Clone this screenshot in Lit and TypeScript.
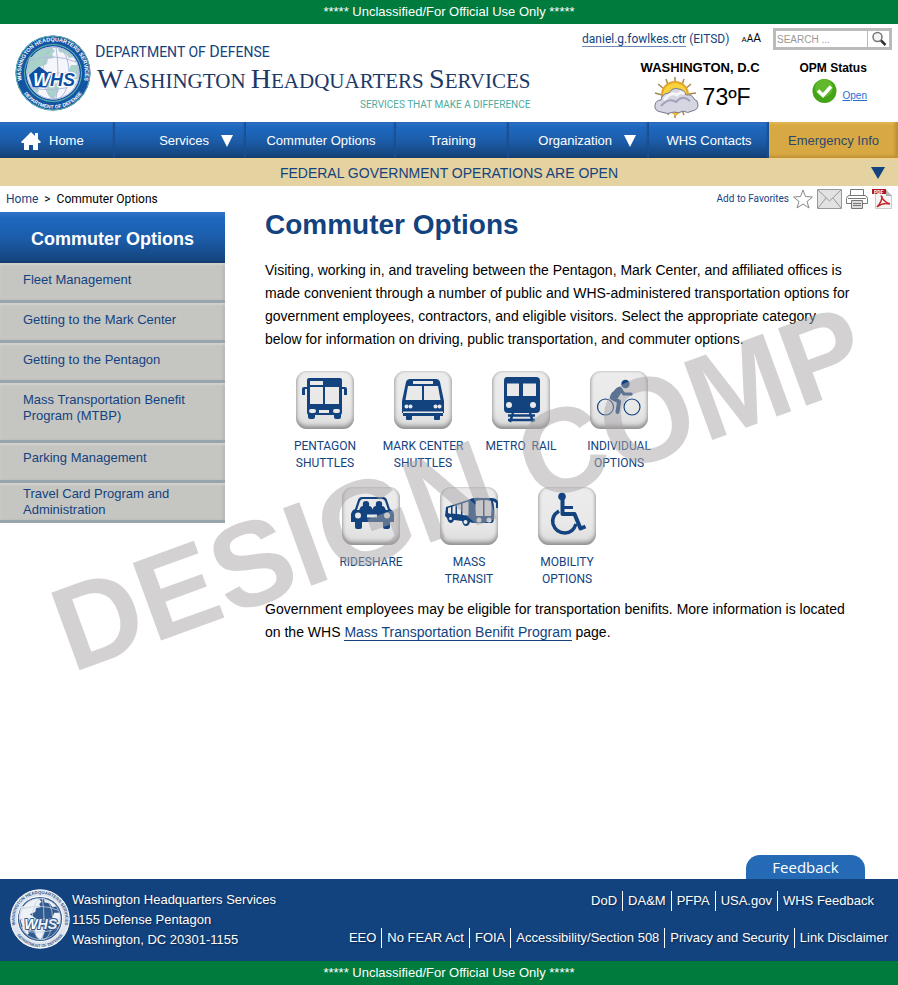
import { LitElement, html, css, svg } from "lit";
import { customElement, property } from "lit/decorators.js";

const NAV = [
  { label: "Home", icon: "home" },
  { label: "Services", menu: true },
  { label: "Commuter Options" },
  { label: "Training" },
  { label: "Organization", menu: true },
  { label: "WHS Contacts" },
  { label: "Emergency Info", alert: true },
];

const SIDE = [
  { label: "Fleet Management" },
  { label: "Getting to the Mark Center" },
  { label: "Getting to the Pentagon" },
  { label: "Mass Transportation Benefit Program (MTBP)", cls: "tall" },
  { label: "Parking Management", cls: "mid" },
  { label: "Travel Card Program and Administration", cls: "tight" },
];

const ROWS = [
  [
    { icon: "bus", lines: ["PENTAGON", "SHUTTLES"] },
    { icon: "coach", lines: ["MARK CENTER", "SHUTTLES"] },
    { icon: "rail", lines: ["METRO \u00a0RAIL"] },
    { icon: "bike", lines: ["INDIVIDUAL", "OPTIONS"] },
  ],
  [
    { icon: "car", lines: ["RIDESHARE"] },
    { icon: "transit", lines: ["MASS", "TRANSIT"] },
    { icon: "chair", lines: ["MOBILITY", "OPTIONS"] },
  ],
];

const LINKS = [
  ["DoD", "DA&M", "PFPA", "USA.gov", "WHS Feedback"],
  ["EEO", "No FEAR Act", "FOIA", "Accessibility/Section 508", "Privacy and Security", "Link Disclaimer"],
];

const B = "#13437f";
const L = "#e9e9ea";

const GLYPHS: Record<string, unknown> = {
  bus: svg`
    <path fill=${B} d="M13 7h31q2 0 2 2v7h3q2 0 2 2v6h-3v-6h-2v23q0 2-1 3v2q0 2-2 2h-3q-2 0-2-2v-2H19v2q0 2-2 2h-3q-2 0-2-2v-2q-1-1-1-3V18H9v6H6v-6q0-2 2-2h3V9q0-2 2-2z"/>
    <path fill=${L} d="M14 10h13v4H14zM14 16h13v17H14zM29 16h14v17H29zM23 39h10v3H23z"/>
    <rect fill=${L} x="13" y="38" width="7" height="4" rx="2"/><rect fill=${L} x="37" y="38" width="7" height="4" rx="2"/>`,
  coach: svg`
    <path fill=${B} d="M16 8h26q3 0 4 3l4 19v12h-1v3h-3v3q0 1-1 1h-4q-1 0-1-1v-3H18v3q0 1-1 1h-4q-1 0-1-1v-3H9v-3H8V30l4-19q1-3 4-3z"/>
    <path fill=${L} d="M19 10h20v3H19zM14 15h14v14H11.500zM30 15h14l2.500 14H30zM9 40.500h40v1.500H9z"/>
    <g fill=${L}><circle cx="12.500" cy="35.500" r="2"/><circle cx="16.500" cy="35.500" r="2"/><circle cx="41.500" cy="35.500" r="2"/><circle cx="45.500" cy="35.500" r="2"/></g>`,
  rail: svg`
    <path fill=${B} d="M15 6h29q4 0 4 4v28q0 4-4 4H16q-4 0-4-4V10q0-4 3-4z"/>
    <path fill=${L} d="M15 12.500h12V25H15zM31 12.500h13V25H31z"/>
    <circle fill=${L} cx="17" cy="34" r="3"/><circle fill=${L} cx="41" cy="34" r="3"/>
    <path stroke=${B} stroke-width="2.500" fill="none" d="M16 44.500h27M16 49h27M21 42l-3 9M38 42l3 9"/>`,
  bike: svg`
    <g fill="none" stroke=${B} stroke-width="1.200"><circle cx="15.500" cy="36" r="8"/><circle cx="42" cy="36" r="8"/></g>
    <circle fill=${B} cx="35.500" cy="13" r="4.200"/>
    <path fill="none" stroke=${B} stroke-width="3.200" stroke-linejoin="round" stroke-linecap="round" d="M30 18l4 5h7"/>
    <path fill="none" stroke=${B} stroke-width="4" stroke-linejoin="round" stroke-linecap="round" d="M22 27l7 3.500-1.500 10.500"/>
    <path fill=${B} d="M20 27q0-4 4-7 4-5 7-4l2 3-5 8q-4 4-8 0z"/>`,
  car: svg`
    <path fill=${B} d="M20 10h21q3 0 4 3l3 9q3 1 4 5v8h-4v5q0 2-2 2h-3q-2 0-2-2v-5H20v5q0 2-2 2h-3q-2 0-2-2v-5H9v-8q1-4 4-5l3-9q1-3 4-3z"/>
    <path fill=${L} d="M21 12h19q2 0 3 2l3 9H15l3-9q1-2 3-2z"/>
    <path fill=${B} d="M17 24q1-5 4-5-1-5 3-5t3 5q3 0 3.500 4 .500-4 3.500-4-1-5 3-5t3 5q3 0 4 5z"/>
    <circle fill=${L} cx="16" cy="28.500" r="3"/><circle fill=${L} cx="45" cy="28.500" r="3"/>
    <rect fill=${L} x="25" y="27.500" width="10" height="3"/>`,
  transit: svg`
    <path fill=${B} d="M6 20l22-7q5-3 13-2h10q6 0 7 4v6h-2v-5l-3-2q2 8 1 17 0 4-2 5H35q-4 0-5-1-1 4-4 4t-4-5l-8-1q-1 3-3 3-3 0-4-5l-2-2z"/>
    <path fill=${L} d="M8 21l3-1v7l-3-1zM12.500 19.500l3-1v8.500l-3-.500zM17 18l4-1v10.500l-4-.500zM22.500 16.500l6-2v14l-6-.500zM36 14q8-2 15 0 1 7 0 15H36q-1-8 0-15z"/>
    <path fill=${B} d="M43 13h1.500v16H43z"/>
    <circle fill=${L} cx="39" cy="33" r="2.500"/><circle fill=${L} cx="49" cy="33" r="2.500"/><circle fill=${L} cx="25.500" cy="35" r="2"/><circle fill=${L} cx="10.500" cy="31.500" r="1.500"/>`,
  chair: svg`
    <circle fill=${B} cx="24" cy="9.500" r="3.800"/>
    <path fill="none" stroke=${B} stroke-width="4" stroke-linejoin="round" d="M24.500 12v15h12l6 14.500 5-2"/>
    <path fill="none" stroke=${B} stroke-width="3" d="M25 20.500h10"/>
    <path fill="none" stroke=${B} stroke-width="3.500" d="M21 24q-8 5-6 13 3 9 12 9 8 0 11-9"/>`,
};

@customElement("whs-seal")
export class WhsSeal extends LitElement {
  @property({ type: Boolean }) mono = false;
  static styles = css`
    :host { display: block; flex: none; }
    svg { display: block; width: 100%; height: 100%; }
    text { font-family: "Liberation Sans", Arial, sans-serif; font-weight: bold; }
    .rim { font-size: 11px; }
    .rim-low { font-size: 10px; }
    .name { font-size: 36px; font-style: italic; paint-order: stroke; stroke-width: 5px; stroke-linejoin: round; }
  `;
  render() {
    const m = this.mono;
    const ring = m ? "#dfe5ee" : "#1455a3";
    const rimText = m ? "#35598a" : "#ffffff";
    const globe = m ? "#315a8e" : "#f4f6fb";
    const land = m ? "#eef1f6" : "#a9d3c9";
    const grid = m ? "#c4d0e0" : "#b4b9e0";
    const blue = m ? "#eef1f6" : "#0f4fa3";
    return html`<svg viewBox="0 0 152 152" role="img" aria-label="WHS seal">
      <defs>
        <path id="up" d="M37.500 127.500A64 64 0 1 1 114.500 127.500" />
        <path id="low" d="M18 117A71 71 0 0 0 134 117" />
      </defs>
      <circle cx="76" cy="76" r="75" fill=${ring} />
      <circle cx="76" cy="76" r="74" fill="none" stroke=${m ? "#fff" : "#5fb3a8"} stroke-width="2" />
      <circle cx="76" cy="76" r="58" fill=${m ? "#fff" : "#5fb3a8"} />
      <circle cx="76" cy="76" r="56" fill=${m ? "#315a8e" : "#1455a3"} />
      <circle cx="76" cy="76" r="53" fill=${globe} />
      <g fill=${land}>
        <path d="M34 44Q48 24 72 24l8 8-6 6 4 8-12 2-2 10-14 6-8 10-14 4-6-2q2-20 8-32z" />
        <path d="M86 26q20 2 32 18l-10 2-8-10-12-2z" />
        <path d="M62 96q18-6 28 6l-4 12-8 14q-14-4-14-18z" />
        <path d="M112 60l14 0q4 14 0 28l-12 2-8-14z" />
        <path d="M30 96l12 2 6 14-4 4q-10-8-14-20z" />
      </g>
      <g fill="none" stroke=${grid} stroke-width="2">
        <circle cx="76" cy="76" r="52" /><ellipse cx="82" cy="76" rx="26" ry="52" />
        <path d="M82 24q8 52 0 104M32 50q48-14 90 4M24 76h104M32 104q44 14 92-6" />
      </g>
      <path d="M27 80l21-18 22 16-7 27H35z" fill=${blue} stroke=${m ? "none" : "#fff"} stroke-width="1" />
      <text class="name" x="36" y="101" fill=${blue} stroke=${m ? "#315a8e" : "#ffffff"}><tspan fill="#ffffff" stroke=${m ? "#315a8e" : "#0f4fa3"}>W</tspan>HS</text>
      <text class="rim" fill=${rimText} text-anchor="middle"><textPath href="#up" startOffset="50%">WASHINGTON HEADQUARTERS SERVICES</textPath></text>
      <text class="rim-low" fill=${rimText} text-anchor="middle"><textPath href="#low" startOffset="50%">DEPARTMENT OF DEFENSE</textPath></text>
    </svg>`;
  }
}

@customElement("app-root")
export class AppRoot extends LitElement {
  static styles = css`
    * { box-sizing: border-box; }
    :host {
      display: flex; flex-direction: column; min-height: 100vh; background: #fff; color: #000;
      font-family: "Liberation Sans", Arial, sans-serif; font-size: 14px; line-height: 16px;
    }
    a { color: #13437f; text-decoration: none; }
    ul { list-style: none; margin: 0; padding: 0; }
    h1, h2, p { margin: 0; }
    button { border: 0; background: none; padding: 0; font: inherit; color: inherit; cursor: pointer; }
    svg { display: block; }
    .narrow { font-family: Roboto, "Arial Narrow", sans-serif; font-size: 12px; }

    .mark { background: #007b3e; color: #fff; height: 24px; line-height: 24px; font-size: 13px; text-align: center; }

    header { display: flex; height: 98px; padding: 4px 6px 0 15px; }
    .seal { width: 76px; height: 76px; margin-top: 7px; }
    .brand { padding: 15px 0 0 4px; color: #13437f; white-space: nowrap; }
    .dept { font-size: 14px; line-height: 18px; }
    .dept b { font-weight: normal; font-size: 16px; }
    .org { font-family: "Liberation Serif", serif; font-size: 21px; line-height: 36px; color: #1c3866; padding-left: 2px; }
    .org b { font-weight: normal; font-size: 28px; }
    .tag { color: #4bab9d; font-size: 10px; line-height: 12px; text-align: right; }
    .side-head { margin-left: auto; display: flex; flex-direction: column; align-items: flex-end; }
    .tools { display: flex; align-items: center; gap: 12px; height: 22px; white-space: nowrap; color: #13437f; }
    .tools .who { border-bottom: 1px solid #6c8ab5; }
    .sizes { display: flex; align-items: baseline; color: #000; }
    .sizes button { font-size: 8px; }
    .sizes .m { font-size: 10px; }
    .sizes .l { font-size: 12px; }
    .search { display: flex; width: 119px; height: 22px; border: 3px solid #bbbbbb; }
    .search input { width: 92px; border: 0; border-right: 1px solid #bbb; padding: 0 0 0 1px; outline: 0; font: 10px "Liberation Sans", sans-serif; }
    .search input::placeholder { color: #999; opacity: 1; }
    .search button { flex: 1; display: grid; place-items: center; }
    .status { display: flex; gap: 40px; padding: 10px 25px 0 0; }
    .status h2 { font-size: 13px; line-height: 16px; white-space: nowrap; }
    .status .opm-title { font-size: 12px; }
    .weather { display: flex; align-items: center; gap: 4px; padding-left: 12px; font-size: 23px; line-height: 38px; }
    .opm { display: flex; align-items: center; gap: 6px; padding-left: 12px; font-size: 10px; }
    .opm a { color: #1d6fd6; text-decoration: underline; padding-top: 12px; }

    .bar { display: grid; grid-template-columns: 115fr 131fr 150fr 113fr 140fr 120fr 129fr; font-size: 13px; }
    .bar a {
      display: flex; align-items: center; justify-content: center; gap: 8px; height: 36px; padding-top: 2px; color: #fff; white-space: nowrap;
      background: linear-gradient(#3172c8, #1e68bf 15%, #1c5dab 50%, #15467f 92%, #123a6a);
      box-shadow: inset -2px 0 2px #1b4e8f;
    }
    .bar a.home { justify-content: flex-start; padding-left: 21px; }
    .bar a.menu { justify-content: flex-end; padding-right: 13px; gap: 12px; }
    .bar a.alert { background: #d8a942; color: #2b4870; box-shadow: inset -3px -2px 3px #bd9138, inset 0 2px 2px #e2b656; }
    .gov {
      display: grid; grid-template-columns: 40px 1fr 40px; align-items: center; height: 28px;
      background: #e4d2a0; color: #13437f; text-align: center; border-top: 1px solid #f3d387;
    }
    .gov button { grid-column: 3; justify-self: center; }
    .gov span { grid-column: 2; }

    .crumbs { display: flex; align-items: center; justify-content: space-between; height: 26px; padding: 0 6px; }
    .crumbs .trail { display: flex; gap: 6px; }
    .actions { display: flex; align-items: center; gap: 4px; font-size: 10px; color: #13437f; }

    .body { position: relative; display: flex; align-items: flex-start; flex: 1; }
    .sidebar { width: 225px; flex: none; }
    .sidebar h2 {
      height: 51px; line-height: 54px; padding-left: 31px; color: #fff; font-size: 18px;
      background: linear-gradient(#3172c8, #1e68bf 12%, #1c5dab 50%, #15467f 94%, #123a6a);
    }
    .sidebar a {
      display: block; min-height: 40px; padding: 9px 30px 0 23px; font-size: 13px; line-height: 16px;
      background: #c5c5c1; border-bottom: 3px solid #99a5ac; box-shadow: inset 0 2px 2px #d2d2cf, inset -2px 0 2px #b4b5b2;
    }
    .sidebar a.tall { min-height: 60px; }
    .sidebar a.mid { padding-top: 7px; }
    .sidebar a.tight { padding-top: 3px; }
    main { flex: 1; padding: 0 20px 40px 40px; }
    h1 { color: #13437f; font-size: 28px; line-height: 26px; margin-bottom: 21px; }
    main p { line-height: 23px; }
    main p a { border-bottom: 1px solid #13437f; }
    .tiles { display: flex; padding-left: 11px; margin-top: 20px; }
    .tiles.second { padding: 0 0 10px 57px; margin-top: 15px; }
    .tile { width: 98px; display: flex; flex-direction: column; align-items: center; text-align: center; line-height: 17px; white-space: nowrap; }
    .pic {
      width: 58px; height: 58px; margin-bottom: 9px; border-radius: 11px;
      background: linear-gradient(#ececed, #e9e9ea 60%, #dcdcdd);
      box-shadow: inset 0 -3px 4px #8f8f8f, inset 0 0 3px #b5b5b5;
    }
    .stamp {
      position: absolute; left: 72px; top: 359px; transform: rotate(-20deg); transform-origin: 0 102px;
      font-weight: bold; font-size: 120px; line-height: 120px; white-space: nowrap; color: rgba(168, 163, 166, 0.5); pointer-events: none;
    }

    .feedback {
      align-self: flex-end; margin-right: 33px; width: 119px; height: 24px; border-radius: 14px 14px 0 0; flex: none;
      background: #256ab5; color: #fff; font: 15px/24px "Open Sans", sans-serif;
    }
    footer { display: flex; height: 82px; padding: 0 10px; background: #13437f; color: #fff; font-size: 13px; text-shadow: 1px 1px 2px #0a2448; }
    footer a { color: #fff; }
    footer .badge { width: 60px; height: 60px; margin: 10px 2px 0 0; text-shadow: none; }
    address { font-style: normal; line-height: 20px; padding-top: 11px; white-space: nowrap; }
    .links { margin-left: auto; display: flex; flex-direction: column; align-items: flex-end; gap: 17px; padding-top: 12px; white-space: nowrap; }
    .links ul { display: flex; line-height: 20px; }
    .links ul:first-child { margin-right: 14px; }
    .links li { padding: 0 5px; }
    .links li + li { border-left: 1px solid #fff; }
    .links li:last-child { padding-right: 0; }
  `;

  private down(color: string, size = 12) {
    return html`<svg width=${size} height="12" viewBox="0 0 12 12" preserveAspectRatio="none" aria-hidden="true"><path d="M0 0h12L6 12z" fill=${color} /></svg>`;
  }

  render() {
    return html`
      <div class="mark">***** Unclassified/For Official Use Only *****</div>
      <header>
        <whs-seal class="seal"></whs-seal>
        <div class="brand">
          <div class="narrow dept"><b>D</b>EPARTMENT OF <b>D</b>EFENSE</div>
          <div class="org"><b>W</b>ASHINGTON <b>H</b>EADQUARTERS <b>S</b>ERVICES</div>
          <div class="narrow tag">SERVICES THAT MAKE A DIFFERENCE</div>
        </div>
        <div class="side-head">
          <div class="tools narrow">
            <span><a class="who" href="#">daniel.g.fowlkes.ctr</a> (EITSD)</span>
            <span class="sizes"><button aria-label="Small text">A</button><button class="m" aria-label="Medium text">A</button><button class="l" aria-label="Large text">A</button></span>
            <form class="search" @submit=${(e: Event) => e.preventDefault()}>
              <input type="text" aria-label="Search" placeholder="SEARCH ..." />
              <button aria-label="Search">
                <svg width="16" height="16" viewBox="0 0 16 16"><circle cx="6.500" cy="6" r="4.500" fill="#f3f3f3" stroke="#777" stroke-width="1.500" /><path d="M10 9.500l4.500 4.500" stroke="#333" stroke-width="2.500" /></svg>
              </button>
            </form>
          </div>
          <div class="status">
            <div>
              <h2>WASHINGTON, D.C</h2>
              <div class="weather">
                <svg width="46" height="42" viewBox="0 0 46 42" aria-hidden="true">
                  <g stroke="#a08a4a" stroke-width="1.500"><path d="M22 1v6M13 3l2 6M31 3l-2 6M5 8l6 5M38 8l-6 5M2 17l7 2M43 17l-7 1M16 34l-1 5M22 34v8M29 34l2 5" /></g>
                  <circle cx="22" cy="19" r="13" fill="#f9d33c" stroke="#e6a52a" stroke-width="2" />
                  <path d="M16 35h13l-6 5z" fill="#f4b52f" />
                  <path d="M8 36q-7-1-6-7 1-5 6-5 1-7 8-7 3-6 10-4 6 1 7 6 6-1 8 4 4 1 4 6 0 5-6 6-4 3-9 0-4 3-9 1-6 3-13 0z" fill="#d5d6e2" stroke="#777a90" />
                  <path d="M8 30q8-9 15-4 7-8 14-1" fill="none" stroke="#9fa1b8" stroke-width="2" />
                  <path d="M11 24q7-9 13-5 4-4 7-1" fill="none" stroke="#f5f5fa" stroke-width="3" />
                </svg>
                <span>73ºF</span>
              </div>
            </div>
            <div>
              <h2 class="opm-title">OPM Status</h2>
              <div class="opm">
                <svg width="25" height="28" viewBox="0 0 25 28" aria-hidden="true">
                  <circle cx="12.500" cy="15" r="12" fill="#45a317" /><circle cx="12" cy="12" r="9" fill="#5fb92a" />
                  <path d="M6 14.500l5 5 8-9" fill="none" stroke="#fff" stroke-width="3.500" />
                </svg>
                <a href="#">Open</a>
              </div>
            </div>
          </div>
        </div>
      </header>

      <nav class="bar" aria-label="Main">
        ${NAV.map(
          (n) => html`<a href="#" class=${n.icon ? "home" : n.menu ? "menu" : n.alert ? "alert" : "plain"}>
            ${n.icon ? html`<svg width="20" height="18" viewBox="0 0 20 18" aria-hidden="true"><path fill="#fff" d="M10 0l4 4V1h3v6l3 3-1 1h-2v7h-5v-5H8v5H3v-7H1l-1-1z" /></svg>` : ""}
            <span>${n.label}</span>${n.menu ? this.down("#fff") : ""}
          </a>`
        )}
      </nav>
      <div class="gov"><span>FEDERAL GOVERNMENT OPERATIONS ARE OPEN</span><button aria-label="Show details">${this.down("#13437f", 14)}</button></div>

      <div class="crumbs narrow">
        <div class="trail"><a href="#">Home</a><span>&gt;</span><span>Commuter Options</span></div>
        <div class="actions">
          <a href="#">Add to Favorites</a>
          <button aria-label="Add to Favorites">
            <svg width="20" height="20" viewBox="0 0 20 20"><path d="M10 1l2.500 6.500 7 .500-5.500 4.500 2 6.500-6-4-6 4 2-6.500L.500 8l7-.500z" fill="#fff" stroke="#888" /></svg>
          </button>
          <button aria-label="E-mail">
            <svg width="25" height="20" viewBox="0 0 25 20"><path d="M.500.500h24v19H.500z" fill="#e2e2e2" stroke="#999" /><path d="M1 1l11.500 11L24 1M1 19l8-10M24 19l-8-10" fill="none" stroke="#999" /></svg>
          </button>
          <button aria-label="Print">
            <svg width="22" height="20" viewBox="0 0 22 20"><g fill="#fff" stroke="#777"><path d="M4.500 7V.500h13V7M3 6.500h16q2.500 1 2.500 3v5h-21v-5q0-2 2.500-3z" /><path d="M5.500 11.500h11v8h-11z" fill="#ddd" /><path d="M7 14.500h8M7 16.500h8M2 9.500h18" /></g></svg>
          </button>
          <button aria-label="PDF">
            <svg width="20" height="20" viewBox="0 0 20 20"><path d="M3.500 1.500h11l5 5v13h-16z" fill="#f4f4f4" stroke="#ccc" /><path d="M14.500 1.500v5h5" fill="#bbb" stroke="#aaa" /><path d="M0 0h14v5H0z" fill="#b0191e" /><text x="2" y="5" font-size="5" font-weight="bold" fill="#fff">PDF</text><path d="M9 6.500q2 6 9 8.500-7-2-13 3 5-5 5-11" fill="none" stroke="#c4272c" stroke-width="1.500" /></svg>
          </button>
        </div>
      </div>

      <div class="body">
        <nav class="sidebar" aria-label="Commuter Options">
          <h2>Commuter Options</h2>
          <ul>${SIDE.map((s) => html`<li><a href="#" class=${s.cls ?? "item"}>${s.label}</a></li>`)}</ul>
        </nav>
        <main>
          <h1>Commuter Options</h1>
          <p>
            Visiting, working in, and traveling between the Pentagon, Mark Center, and affiliated offices is<br />
            made convenient through a number of public and WHS-administered transportation options for<br />
            government employees, contractors, and eligible visitors. Select the appropriate category<br />
            below for information on driving, public transportation, and commuter options.
          </p>
          ${ROWS.map(
            (row, i) => html`<div class="tiles narrow ${i ? "second" : ""}">
              ${row.map(
                (t) => html`<a class="tile" href="#">
                  <span class="pic"><svg width="58" height="58" viewBox="0 0 58 58" aria-hidden="true">${GLYPHS[t.icon]}</svg></span>
                  ${t.lines.map((l) => html`<span>${l}</span>`)}
                </a>`
              )}
            </div>`
          )}
          <p>
            Government employees may be eligible for transportation benifits. More information is located<br />
            on the WHS <a href="#">Mass Transportation Benifit Program</a> page.
          </p>
        </main>
        <div class="stamp">DESIGN COMP</div>
      </div>

      <button class="feedback">Feedback</button>
      <footer>
        <whs-seal class="badge" mono></whs-seal>
        <address>Washington Headquarters Services<br />1155 Defense Pentagon<br />Washington, DC 20301-1155</address>
        <div class="links">
          ${LINKS.map((row) => html`<ul>${row.map((l) => html`<li><a href="#">${l}</a></li>`)}</ul>`)}
        </div>
      </footer>
      <div class="mark">***** Unclassified/For Official Use Only *****</div>
    `;
  }
}
